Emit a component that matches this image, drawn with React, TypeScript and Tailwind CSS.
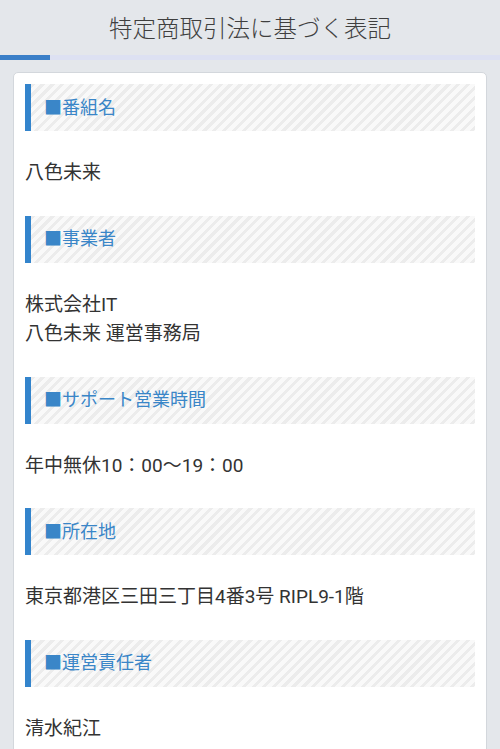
import * as React from "react";

// ─── Data ──────────────────────────────────────────────────

interface Section {
  title: string;
  lines: string[];
}

const sections: Section[] = [
  { title: "番組名", lines: ["八色未来"] },
  { title: "事業者", lines: ["株式会社IT", "八色未来 運営事務局"] },
  { title: "サポート営業時間", lines: ["年中無休10：00〜19：00"] },
  { title: "所在地", lines: ["東京都港区三田三丁目4番3号 RIPL9-1階"] },
  { title: "運営責任者", lines: ["清水紀江"] },
];

// ─── Heading ───────────────────────────────────────────────

function SectionHeading({ title }: { title: string }) {
  return (
    <div className="flex h-[47px] items-center border-l-[6px] border-[#3384cc] bg-[repeating-linear-gradient(135deg,#ececec_0,#ececec_3px,#f9f9f9_3px,#f9f9f9_7px)] pl-[13px]">
      <span className="text-[18px] leading-none text-[#3a86c8]">■{title}</span>
    </div>
  );
}

// ─── Page ──────────────────────────────────────────────────

export default function App() {
  return (
    <div
      className="min-h-[749px] bg-[#e4e7eb] pb-6"
      style={{ fontFamily: 'Roboto, "Noto Sans CJK JP", "Noto Sans", sans-serif' }}
    >
      {/* Title */}
      <h1
        className="flex h-[55px] items-center justify-center text-[23.5px] font-light text-[#3f3f3f]"
        style={{ fontFamily: '"Noto Sans CJK JP", sans-serif' }}
      >
        特定商取引法に基づく表記
      </h1>

      {/* Progress bar */}
      <div className="flex h-[5px] bg-[#dde1f2]">
        <div className="w-[50px] bg-[#3a7fc8]" />
      </div>

      {/* Card */}
      <div className="mx-[13px] mt-[12px] rounded-[5px] border border-[#d3d7dc] bg-white px-[11px] pt-[11px]">
        {sections.map((s) => (
          <div key={s.title}>
            <SectionHeading title={s.title} />
            <div className="pb-[28px] pt-[27px] text-[19px] leading-[29.5px] text-[#333]">
              {s.lines.map((l) => (
                <p key={l}>{l}</p>
              ))}
            </div>
          </div>
        ))}
      </div>
    </div>
  );
}
